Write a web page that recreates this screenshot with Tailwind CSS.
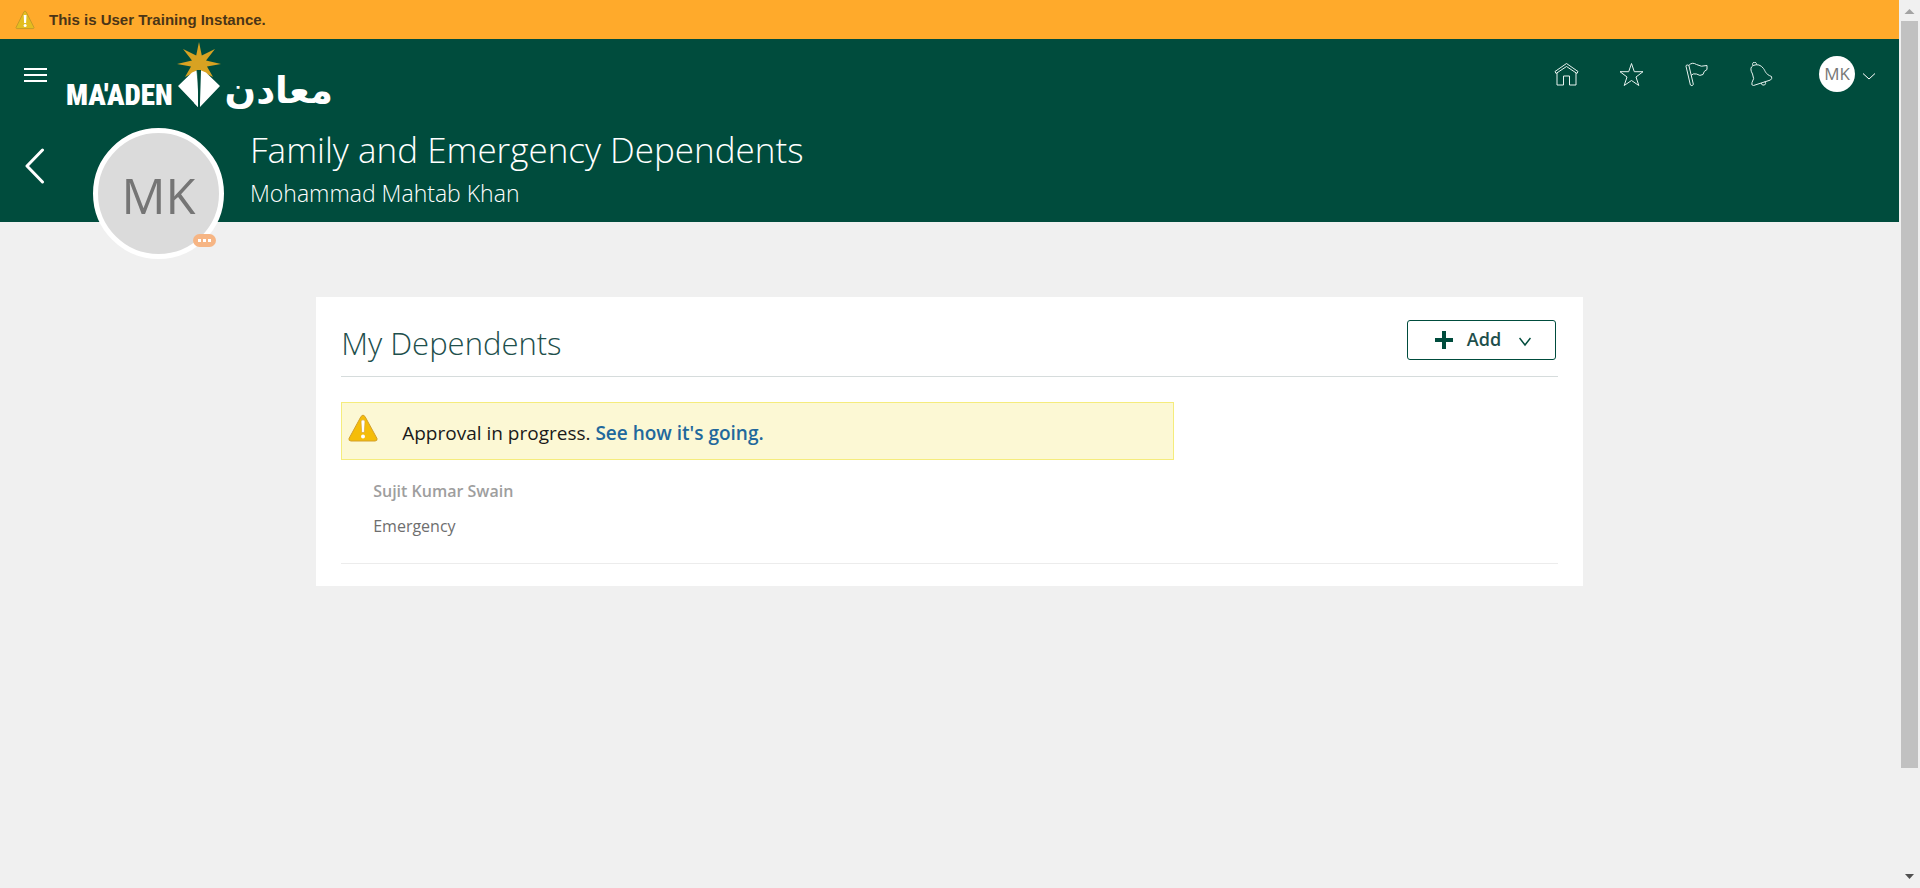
<!DOCTYPE html>
<html lang="en">
<head>
<meta charset="utf-8">
<meta name="viewport" content="width=device-width, initial-scale=1">
<title>Family and Emergency Dependents</title>
<script src="https://cdn.jsdelivr.net/npm/@tailwindcss/browser@4"></script>
</head>
<body class="flex min-h-screen bg-[#f0f0f0] font-['Open_Sans',sans-serif]">
<div class="min-w-0 flex-1">
  <div role="status" class="flex h-[39px] items-center gap-[14px] bg-[#ffaa2b] pl-[15px]">
    <svg class="h-5 w-5" viewBox="0 0 20 20" aria-hidden="true"><path d="M8.900 1.800Q10 .2 11.100 1.800L19 17.500Q19 18.600 18 18.600H2Q1 18.600 1 17.500Z" fill="#e3bd20" stroke="#c99b26"/><path d="M8.700 5h2.800l-.4 8H9.100z" fill="#fff"/><circle cx="10.100" cy="15.600" r="1.500" fill="#fff"/></svg>
    <p class="font-['Liberation_Sans',sans-serif] text-[15px] leading-5 font-bold text-[#4a3517]">This is User Training Instance.</p>
  </div>

  <header class="bg-[#004c3d] text-white">
    <div class="flex h-[72px] items-start pr-6 pl-6">
      <button type="button" aria-label="Navigator" class="mt-[28px] w-[23px]">
        <svg class="block h-4 w-[23px]" viewBox="0 0 23 16" fill="#fff"><path d="M0 1h23v2H0zM0 7h23v2H0zM0 13h23v2H0z"/></svg>
      </button>
      <a href="#" aria-label="Ma'aden home" class="ml-[19px] flex items-end text-white">
        <span class="font-['Roboto_Condensed','Liberation_Sans_Narrow','Liberation_Sans',sans-serif] text-[29px] leading-6 font-black">MA'ADEN</span>
        <svg class="ml-1 h-[68px] w-[44px]" viewBox="0 0 44 68" aria-hidden="true">
          <path d="M22 3l2.800 13.500L38 10 29 21.500 44 25 30 27.500 36 38 22 31 8 38l6-10.500L0 25l15-3.500L6 10l13.200 6.500z" fill="#d8a222"/>
          <path d="M21 31v37L1 47 15 33.500zM23 31l6 2.500L43 47 23 68z" fill="#fff"/><path d="M19.500 31h4.500l-1 32-1 5z" fill="#004c3d"/><path d="M20 31l1 37-4-4z" fill="#fff"/>
        </svg>
        <span lang="ar" dir="rtl" class="ml-1 font-['DejaVu_Sans',sans-serif] text-[37px] leading-8 font-bold">معادن</span>
      </a>
      <nav aria-label="Global" class="mt-[17px] ml-auto flex items-center">
        <a href="#" aria-label="Home" class="mr-10"><svg class="h-[25px] w-[25px]" viewBox="0 0 25 25" fill="none" stroke="#e7f2ef"><path d="M12.500 1.500L1 9.500l1 2 10.500-7L23 11.500l1-2zM3 11v12h6.500v-9h6v9H22V11"/></svg></a>
        <a href="#" aria-label="Favorites" class="mr-10"><svg class="h-[25px] w-[25px]" viewBox="0 0 25 25" fill="none" stroke="#e7f2ef"><path d="M12.500 1.500l2.800 8.200H24l-7 5.300 2.800 8.500-7.300-5-7.300 5L8 15 1 9.700h8.700z"/></svg></a>
        <a href="#" aria-label="Watchlist" class="mr-10"><svg class="h-[25px] w-[25px]" viewBox="0 0 25 25" fill="none" stroke="#e7f2ef"><path d="M2 4.200q0-1.400 1.700-1.200L4.900 3.500l4.500 19-1.500 1.200-1.500-.7zM4.800 3.500Q8-.4 12.500 2.500T23 3.500v4Q19.500 9 19 12.500 16 14.500 12.500 12 9 11 7 13.500"/></svg></a>
        <a href="#" aria-label="Notifications" class="mr-10"><svg class="h-[25px] w-[25px]" viewBox="0 0 25 25" fill="none" stroke="#e7f2ef"><path d="M4 3.500a2 2 0 1 1 3.500-1M4 3.500Q10.500 1 14.500 6.500C16.500 9 16 12 22.500 14.500q1 2-1 3.500L4.500 23.500Q2 23.500 3 20.500 6 17 3.500 12 0 6 4 3.500M12 21q1 3 3.500 2 2-1 .5-3.500"/></svg></a>
        <button type="button" aria-label="Settings and Actions" class="ml-[5px] flex items-center gap-2">
          <span class="flex h-9 w-9 items-center justify-center rounded-full bg-white text-[17px] text-[#777]">MK</span>
          <svg class="mt-1 h-3 w-3" viewBox="0 0 12 12" fill="none" stroke="#fff"><path d="M0 3.500l6 5.500 6-5.500"/></svg>
        </button>
      </nav>
    </div>
    <div class="flex h-[111px] items-start pl-[25px]">
      <button type="button" aria-label="Back" class="mt-[37px] w-5"><svg class="h-[36px] w-5" viewBox="0 0 20 36" fill="none" stroke="#fff" stroke-width="3" stroke-linecap="round" stroke-linejoin="round"><path d="M17.500 2L2 18l15.500 16"/></svg></button>
      <div class="relative mt-[17px] ml-12">
        <div class="flex h-[131px] w-[131px] items-center justify-center rounded-full border-[5px] border-white bg-[#dbdbdb] pt-1 text-[49px] text-[#757575]">MK</div>
        <button type="button" aria-label="More actions" class="absolute right-2 bottom-[12px] flex h-[13px] w-[23px] items-center justify-center gap-[2px] rounded-full bg-[#f6b584]"><i class="h-[3px] w-[3px] bg-white"></i><i class="h-[3px] w-[3px] bg-white"></i><i class="h-[3px] w-[3px] bg-white"></i></button>
      </div>
      <div class="mt-[14px] ml-[26px]">
        <h1 class="text-[35px] leading-[50px] font-light">Family and Emergency Dependents</h1>
        <p class="text-[23px] leading-9 font-light">Mohammad Mahtab Khan</p>
      </div>
    </div>
  </header>

  <main class="mx-auto mt-[75px] w-[66.7%] bg-white px-[25px] pb-[22px]">
    <div class="flex h-20 items-center justify-between border-b border-[#d6dcdc] pr-[2px]">
      <h2 class="mt-3 text-[31px] leading-[46px] font-light text-[#1e4f4c]">My Dependents</h2>
      <button type="button" class="mt-[6px] flex h-10 w-[149px] items-center rounded-[3px] border border-[#004c3d] pl-[27px] text-[18px] font-semibold text-[#1e4f4c]">
        <svg class="h-[18px] w-[18px]" viewBox="0 0 18 18" stroke="#004c3d" stroke-width="4"><path d="M9 0v18M0 9h18"/></svg>
        <span class="ml-[14px]">Add</span>
        <svg class="mt-1 ml-[18px] h-3 w-3" viewBox="0 0 12 12" fill="none" stroke="#004c3d" stroke-width="1.500"><path d="M.5 2L6 9l5.500-7"/></svg>
      </button>
    </div>
    <div class="mt-[25px] flex h-[58px] w-[833px] max-w-full border border-[#f5ec7c] bg-[#fcf8d4] pl-[6px]">
      <svg class="mt-[11px] h-7 w-[30px]" viewBox="0 0 30 28" aria-hidden="true"><path d="M13 2.500q2-3 4 0l12 22q.5 2.500-2 2.500H3Q.5 27 1 24.500z" fill="#f5bd08" stroke="#d3a02c"/><path d="M13 7q2-2.500 4 0l-.7 11.500h-2.600z" fill="#fff" stroke="#d3a02c" stroke-width=".6"/><circle cx="15" cy="22.500" r="2" fill="#fff"/></svg>
      <p class="mt-[14px] ml-6 text-[19px] leading-8 text-[#1a1a1a]">Approval in progress. <a href="#" class="font-semibold text-[#22689c]">See how it's going.</a></p>
    </div>
    <div class="border-b border-[#ececec] pt-[14px] pb-[19px] pl-8 leading-[35px]">
      <p class="text-[16px] leading-[35px] font-semibold text-[#9e9e9e]">Sujit Kumar Swain</p>
      <p class="text-[16px] leading-[35px] text-[#6e6e6e]">Emergency</p>
    </div>
  </main>
</div>
<div aria-hidden="true" class="flex min-h-screen w-[21px] flex-col items-center bg-[#f0f0f0]">
  <svg class="h-[21px] w-[17px]" viewBox="0 0 17 21" fill="#a3a3a3"><path d="M8.500 9l5 5h-10z"/></svg>
  <div class="w-[17px] flex-[747] bg-[#c1c1c1]"></div>
  <div class="flex-[99]"></div>
  <svg class="h-[21px] w-[17px]" viewBox="0 0 17 21" fill="#505050"><path d="M4 7h9l-4.500 5z"/></svg>
</div>
</body>
</html>
